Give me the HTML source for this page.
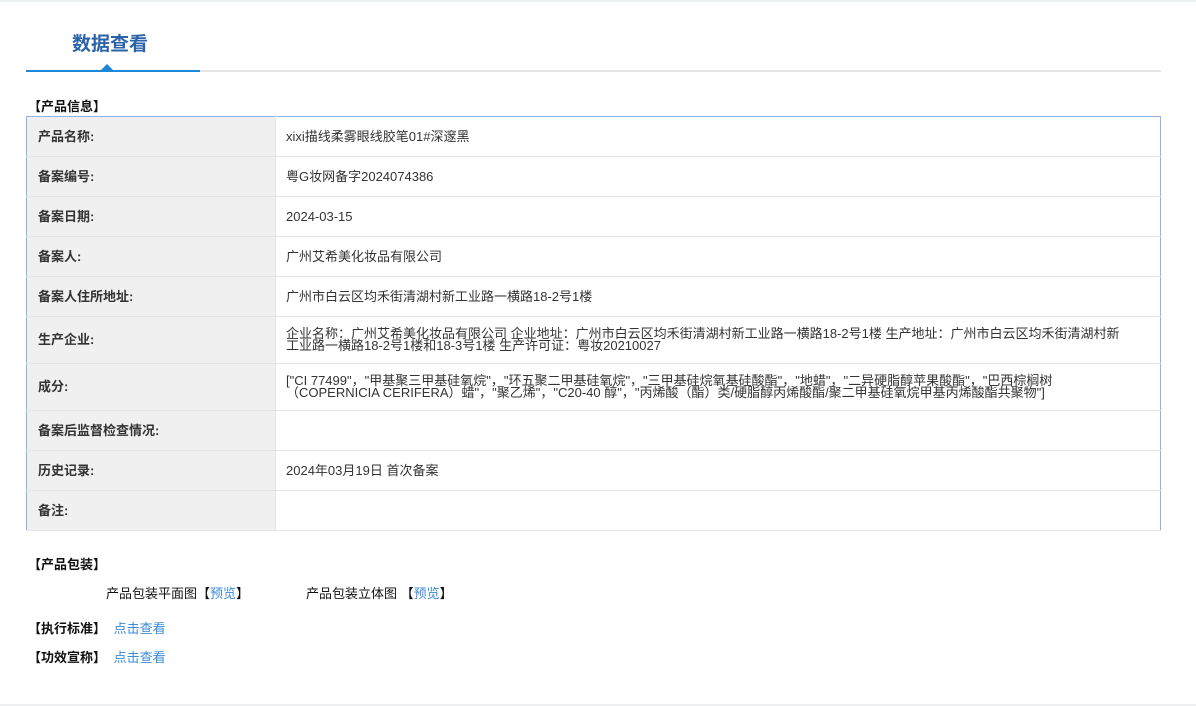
<!DOCTYPE html>
<html><head><meta charset="utf-8"><style>
*{margin:0;padding:0;box-sizing:border-box}
body{width:1196px;height:706px;background:#fff;font-family:"Liberation Sans","Noto Sans CJK SC",sans-serif;font-size:13px;color:#333;position:relative;overflow:hidden}
.topbar{position:absolute;left:0;top:0;width:1196px;height:2px;background:#eef1f4}
.botbar{position:absolute;left:0;bottom:0;width:1196px;height:2px;background:#eef1f4}
.title{position:absolute;left:72px;top:29px;font-size:19px;font-weight:bold;color:#2a63a8}
.gline{position:absolute;left:200px;top:70px;width:961px;height:2px;background:#e6e6e6}
.bline{position:absolute;left:26px;top:70px;width:174px;height:2px;background:#1e88d8}
.tri{position:absolute;left:101px;top:64px;width:0;height:0;border-left:6px solid transparent;border-right:6px solid transparent;border-bottom:6px solid #1e88d8}
.sec{position:absolute;font-weight:bold;color:#111;font-size:13px}
table{position:absolute;left:26px;top:116px;width:1135px;border-collapse:collapse;border:1px solid #8fb3e8}
td{border-bottom:1px solid #e4e4e4;height:40px;vertical-align:middle;line-height:12px}
td.l{width:249px;background:#f0f0f0;font-weight:bold;padding-left:11px;color:#333;border-right:1px solid #e4e4e4}
td.v{padding-left:10px;padding-right:40px;color:#333}
tr.t td{height:47px}
a{color:#3b8ad9;text-decoration:none}
.line{position:absolute;font-size:13px;color:#111}
</style></head><body>
<div class="topbar"></div><div class="botbar"></div>
<div class="title">数据查看</div>
<div class="gline"></div><div class="bline"></div><div class="tri"></div>
<div class="sec" style="left:28px;top:96px">【产品信息】</div>
<table>
<tr><td class="l">产品名称:</td><td class="v">xixi描线柔雾眼线胶笔01#深邃黑</td></tr>
<tr><td class="l">备案编号:</td><td class="v">粤G妆网备字2024074386</td></tr>
<tr><td class="l">备案日期:</td><td class="v">2024-03-15</td></tr>
<tr><td class="l">备案人:</td><td class="v">广州艾希美化妆品有限公司</td></tr>
<tr><td class="l">备案人住所地址:</td><td class="v">广州市白云区均禾街清湖村新工业路一横路18-2号1楼</td></tr>
<tr class="t"><td class="l">生产企业:</td><td class="v">企业名称：广州艾希美化妆品有限公司 企业地址：广州市白云区均禾街清湖村新工业路一横路18-2号1楼 生产地址：广州市白云区均禾街清湖村新工业路一横路18-2号1楼和18-3号1楼 生产许可证：粤妆20210027</td></tr>
<tr class="t"><td class="l">成分:</td><td class="v">["CI 77499"，"甲基聚三甲基硅氧烷"，"环五聚二甲基硅氧烷"，"三甲基硅烷氧基硅酸酯"，"地蜡"，"二异硬脂醇苹果酸酯"，"巴西棕榈树（COPERNICIA CERIFERA）蜡"，"聚乙烯"，"C20-40 醇"，"丙烯酸（酯）类/硬脂醇丙烯酸酯/聚二甲基硅氧烷甲基丙烯酸酯共聚物"]</td></tr>
<tr><td class="l">备案后监督检查情况:</td><td class="v"></td></tr>
<tr><td class="l">历史记录:</td><td class="v">2024年03月19日 首次备案</td></tr>
<tr><td class="l">备注:</td><td class="v"></td></tr>
</table>
<div class="sec" style="left:28px;top:554px">【产品包装】</div>
<div class="line" style="left:106px;top:583px">产品包装平面图【<a>预览</a>】</div>
<div class="line" style="left:306px;top:583px">产品包装立体图 【<a>预览</a>】</div>
<div class="sec" style="left:28px;top:618px">【执行标准】 <a style="font-weight:normal;margin-left:4px">点击查看</a></div>
<div class="sec" style="left:28px;top:647px">【功效宣称】 <a style="font-weight:normal;margin-left:4px">点击查看</a></div>
</body></html>
